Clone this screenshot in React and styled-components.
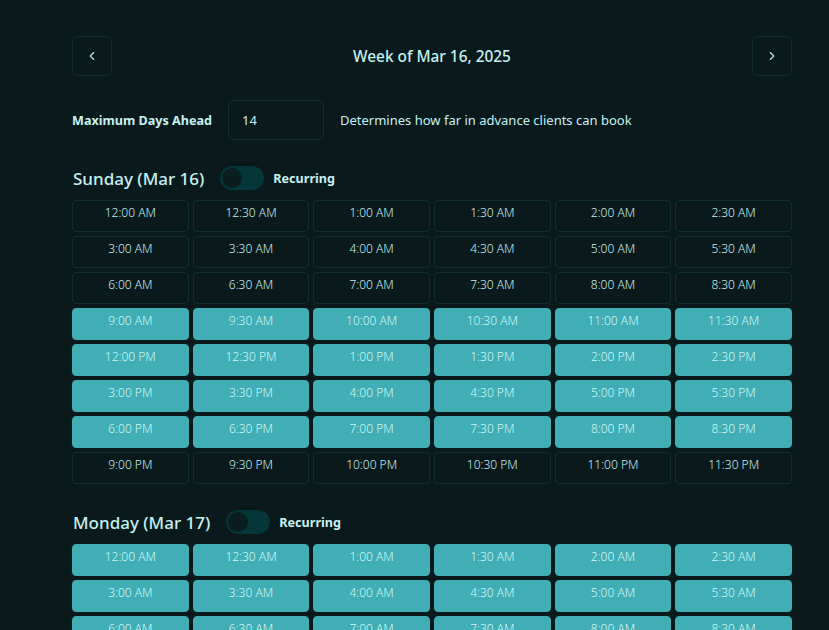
import React from 'react';
import styled, { createGlobalStyle } from 'styled-components';

const GlobalStyle = createGlobalStyle`
  body {
    margin: 0;
    background: #0a191b;
    font-family: "Noto Sans", "Open Sans", sans-serif;
    color: #c6f1f2;
  }
`;

const Page = styled.div`
  padding: 36px 37px 40px 72px;
  display: flex;
  flex-direction: column;
  width: 720px;
`;

const WeekNav = styled.div`
  display: flex;
  align-items: center;
  justify-content: space-between;
  height: 40px;
`;

const NavButton = styled.button`
  width: 40px;
  height: 40px;
  border: 1px solid #0f2f32;
  border-radius: 6px;
  background: transparent;
  color: #b8e8ea;
  display: flex;
  align-items: center;
  justify-content: center;
  padding: 0;
  cursor: pointer;
`;

const WeekTitle = styled.h2`
  margin: 0;
  font-size: 15.4px;
  font-weight: 500;
  color: #c6f1f2;
`;

const SettingRow = styled.div`
  display: flex;
  align-items: center;
  margin-top: 24px;
  height: 40px;
`;

const SettingLabel = styled.label`
  font-size: 12.6px;
  font-weight: 700;
  color: #c6f1f2;
  margin-right: 16px;
`;

const NumberInput = styled.input`
  width: 96px;
  height: 40px;
  box-sizing: border-box;
  background: transparent;
  border: 1px solid #0f2f32;
  border-radius: 6px;
  color: #c6f1f2;
  font-family: inherit;
  font-size: 13px;
  padding: 0 13px;
  outline: none;
`;

const Hint = styled.span`
  font-size: 13px;
  color: #c6f1f2;
  margin-left: 16px;
`;

const DayBlock = styled.section`
  margin-top: 26px;
  display: flex;
  flex-direction: column;
  gap: 10px;
`;

const DayHeader = styled.div`
  display: flex;
  align-items: center;
  height: 24px;
`;

const DayTitle = styled.h3`
  margin: 0 16px 0 1px;
  font-size: 17px;
  font-weight: 500;
  color: #c6f1f2;
`;

const Toggle = styled.span`
  width: 44px;
  height: 24px;
  border-radius: 12px;
  background: #05373a;
  position: relative;
  display: inline-block;
  margin-right: 9px;
  &::after {
    content: '';
    position: absolute;
    top: 2px;
    left: ${(p) => (p.$on ? '22px' : '2px')};
    width: 20px;
    height: 20px;
    border-radius: 50%;
    background: #0a1d1f;
  }
`;

const ToggleLabel = styled.span`
  font-size: 12.6px;
  font-weight: 700;
  color: #c6f1f2;
`;

const SlotGrid = styled.div`
  display: grid;
  grid-template-columns: repeat(6, 1fr);
  gap: 4px;
`;

const Slot = styled.button`
  height: 32px;
  border-radius: 4px;
  border: 1px solid ${(p) => (p.$active ? '#40aeb4' : '#0f2f32')};
  background: ${(p) => (p.$active ? '#40aeb4' : 'transparent')};
  color: ${(p) => (p.$active ? '#d4f6f6' : '#c6f1f2')};
  font-family: inherit;
  font-size: 12px;
  font-weight: 300;
  padding: 0 0 7px;
  cursor: pointer;
`;

const times = Array.from({ length: 48 }, (_, i) => {
  const h = Math.floor(i / 2);
  const m = i % 2 ? '30' : '00';
  const h12 = h % 12 === 0 ? 12 : h % 12;
  return `${h12}:${m} ${h < 12 ? 'AM' : 'PM'}`;
});

const days = [
  { name: 'Sunday (Mar 16)', isActive: (i) => i >= 18 && i < 42 },
  { name: 'Monday (Mar 17)', isActive: () => true },
];

const Chevron = ({ dir }) => (
  <svg width="14" height="14" viewBox="0 0 24 24" fill="none" stroke="currentColor" strokeWidth="2" strokeLinecap="round" strokeLinejoin="round">
    <path d={dir === 'left' ? 'M15 18l-6-6 6-6' : 'M9 18l6-6-6-6'} />
  </svg>
);

export default function App() {
  return (
    <>
      <GlobalStyle />
      <Page>
        <WeekNav>
          <NavButton aria-label="Previous week"><Chevron dir="left" /></NavButton>
          <WeekTitle>Week of Mar 16, 2025</WeekTitle>
          <NavButton aria-label="Next week"><Chevron dir="right" /></NavButton>
        </WeekNav>
        <SettingRow>
          <SettingLabel>Maximum Days Ahead</SettingLabel>
          <NumberInput type="text" defaultValue="14" />
          <Hint>Determines how far in advance clients can book</Hint>
        </SettingRow>
        {days.map((d) => (
          <DayBlock key={d.name}>
            <DayHeader>
              <DayTitle>{d.name}</DayTitle>
              <Toggle />
              <ToggleLabel>Recurring</ToggleLabel>
            </DayHeader>
            <SlotGrid>
              {times.map((t, i) => (
                <Slot key={t} $active={d.isActive(i)}>{t}</Slot>
              ))}
            </SlotGrid>
          </DayBlock>
        ))}
      </Page>
    </>
  );
}
